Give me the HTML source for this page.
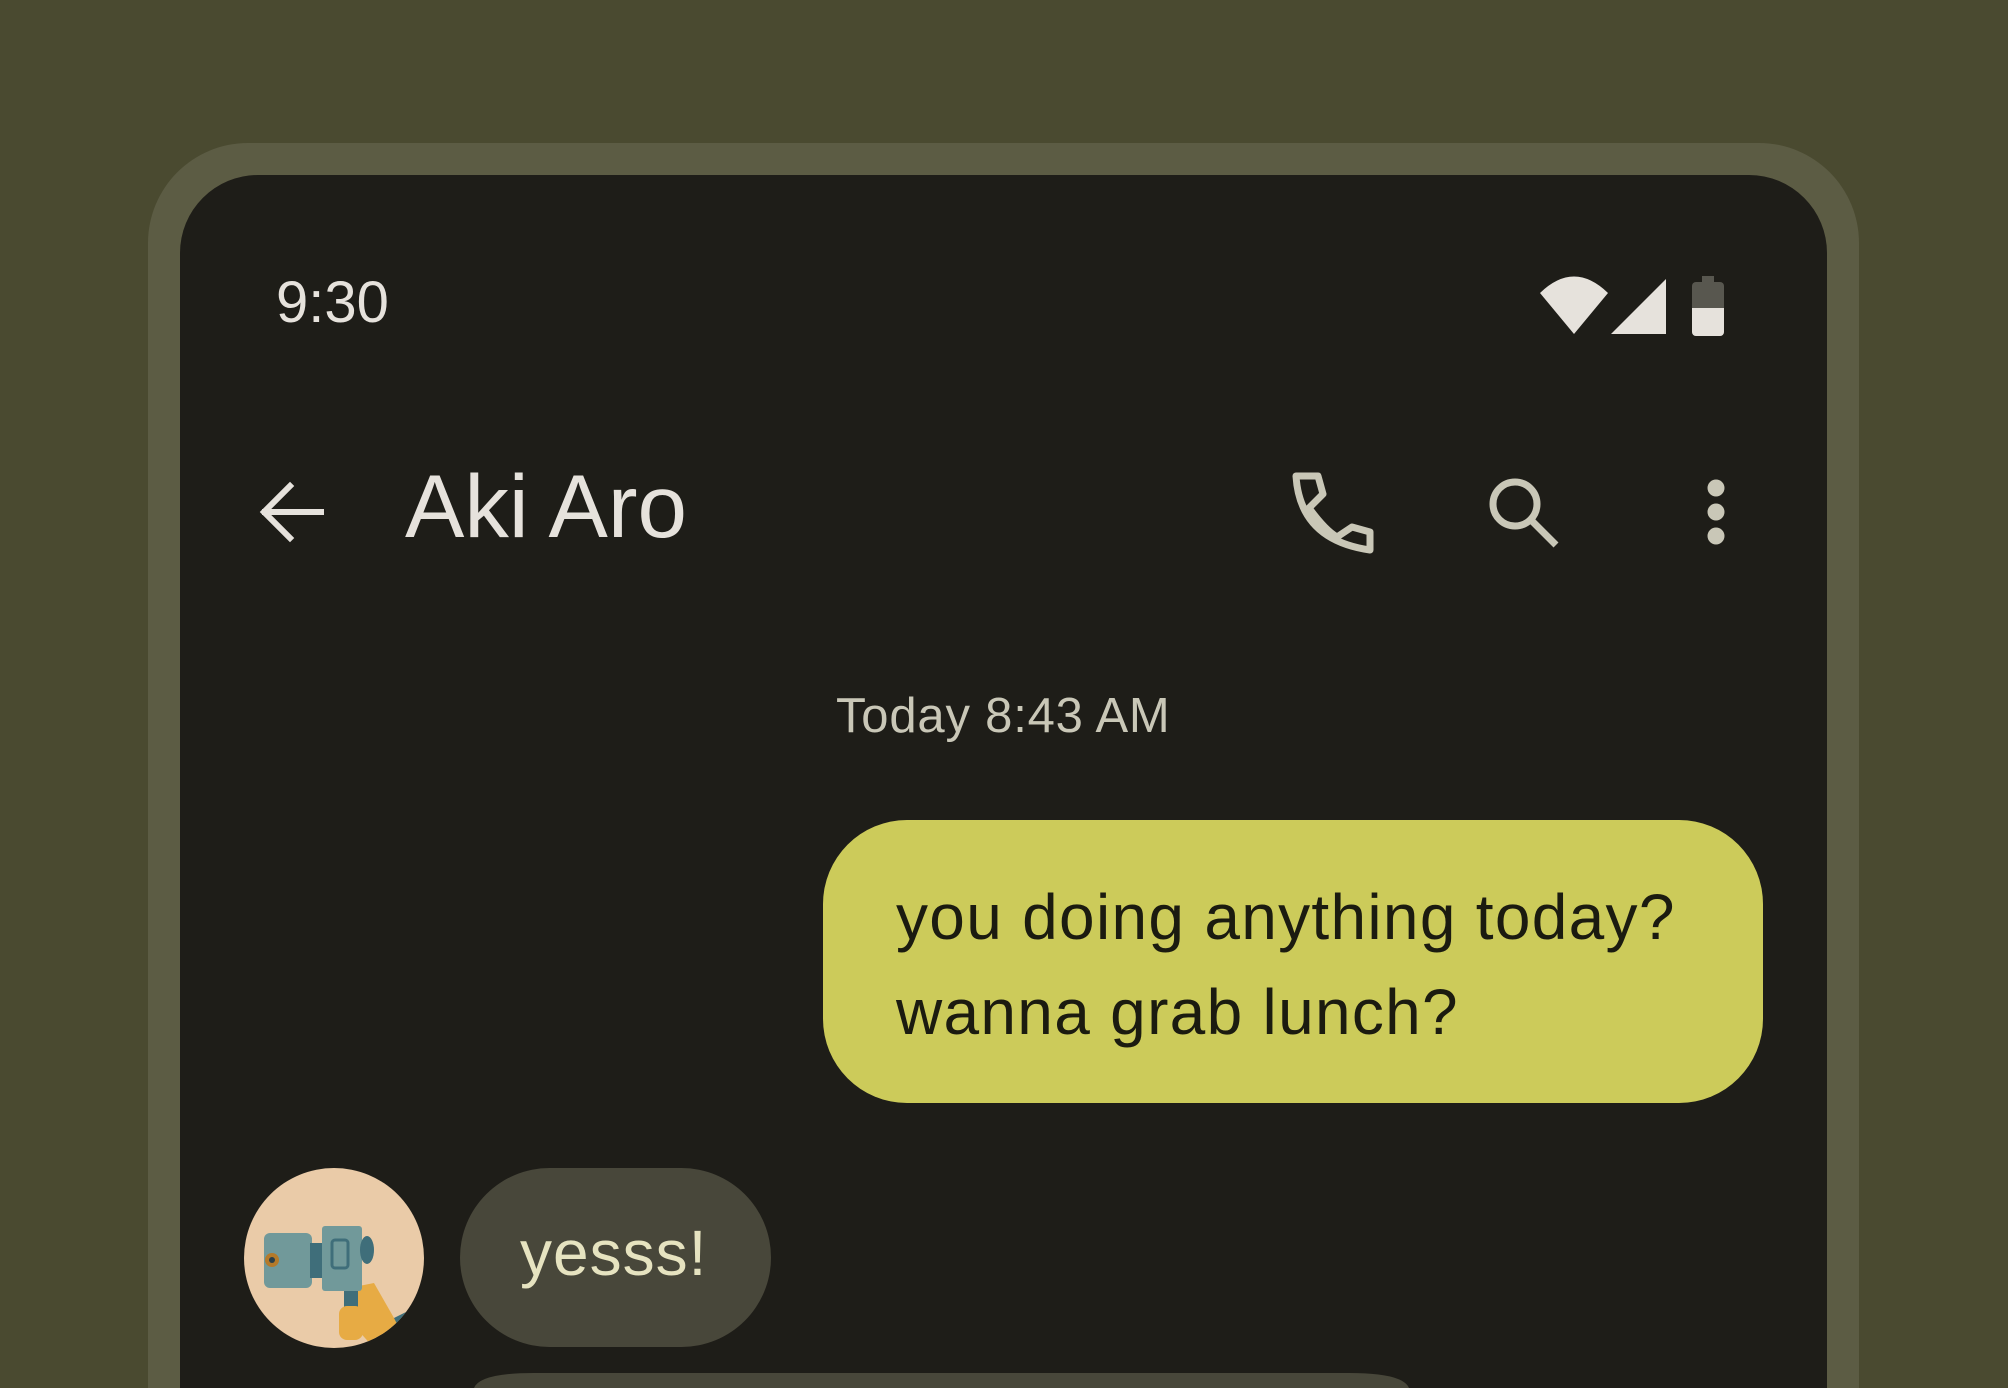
<!DOCTYPE html>
<html><head><meta charset="utf-8"><style>
html,body{margin:0;padding:0;width:2008px;height:1388px;overflow:hidden;background:#4a4a30;font-family:"Liberation Sans",sans-serif}
#wrap{position:relative;width:2008px;height:1388px;overflow:hidden}
.frame{position:absolute;left:148px;top:143px;width:1711px;height:1245px;background:#5c5c44;border-radius:100px 100px 0 0}
.screen{position:absolute;left:180px;top:175px;width:1647px;height:1213px;background:#1e1d18;border-radius:78px 78px 0 0}
.abs{position:absolute;white-space:nowrap}
</style></head><body><div id="wrap">
<div class="frame"></div>
<div class="screen"></div>
<div class="abs" style="left:276px;top:268px;font-size:58px;color:#e6e2dc;line-height:70px">9:30</div>
<svg class="abs" style="left:0;top:0" width="2008" height="1388">
 <path d="M1540 293 Q1574 260 1608 293 L1574 334 Z" fill="#e6e2dc"/>
 <path d="M1611 334 L1666 279 L1666 334 Z" fill="#e6e2dc"/>
 <rect x="1702" y="276" width="12" height="8" fill="#58574f"/>
 <rect x="1692" y="282" width="32" height="54" rx="4" fill="#58574f"/>
 <path d="M1692 308 H1724 V332 a4 4 0 0 1 -4 4 H1696 a4 4 0 0 1 -4 -4Z" fill="#e6e2dc"/>
 <g stroke="#e6e2dc" stroke-width="6" fill="none" stroke-linecap="square">
  <path d="M265 512 H321"/><path d="M290 486 L264 512 L290 538"/>
 </g>
 <g stroke="#c9c7b7" stroke-width="7" fill="none" stroke-linejoin="round">
  <path d="M1296 476 H1318 L1323 494 L1309 508 Q1325 530 1337 537 L1352 527 L1370 532 V550 Q1300 540 1296 476 Z"/>
  <circle cx="1515" cy="504" r="22"/>
  <path d="M1531 520 L1556 545"/>
 </g>
 <g fill="#c9c7b7"><circle cx="1716" cy="488" r="8.5"/><circle cx="1716" cy="512" r="8.5"/><circle cx="1716" cy="536" r="8.5"/></g>
 <path d="M474 1388 Q480 1373 534 1373 H1349 Q1403 1373 1409 1388 Z" fill="#48473a"/>
</svg>
<div class="abs" style="left:405px;top:456px;font-size:89px;color:#e6e2dc;line-height:100px">Aki Aro</div>
<div class="abs" style="left:836px;top:688px;font-size:49px;letter-spacing:0.8px;color:#c9c7b7;line-height:56px">Today 8:43 AM</div>
<div class="abs" style="left:823px;top:820px;width:940px;height:283px;background:#cccb5a;border-radius:84px"></div>
<div class="abs" style="left:896px;top:870px;font-size:64px;letter-spacing:1.3px;color:#1b1b10;line-height:95px">you doing anything today?<br>wanna grab lunch?</div>
<svg class="abs" style="left:244px;top:1168px" width="180" height="180" viewBox="0 0 180 180">
 <defs><clipPath id="c"><circle cx="90" cy="90" r="90"/></clipPath></defs>
 <circle cx="90" cy="90" r="90" fill="#eacba8"/>
 <g clip-path="url(#c)">
  <path d="M150 150 L180 135 L180 180 L140 180Z" fill="#3f6e7a"/>
  <path d="M105 120 L130 115 L150 150 L160 170 L130 180 L112 160Z" fill="#e7ab44"/>
  <rect x="100" y="115" width="14" height="55" rx="4" fill="#3f6e7a"/>
  <rect x="95" y="138" width="24" height="34" rx="8" fill="#e7ab44"/>
  <rect x="20" y="65" width="48" height="55" rx="6" fill="#71999a"/>
  <rect x="66" y="75" width="12" height="35" fill="#3f6e7a"/>
  <rect x="78" y="58" width="40" height="65" rx="3" fill="#71999a"/>
  <rect x="88" y="72" width="16" height="28" rx="3" fill="none" stroke="#3f6e7a" stroke-width="3"/>
  <ellipse cx="123" cy="82" rx="7" ry="14" fill="#3f6e7a"/>
  <circle cx="28" cy="92" r="7" fill="#b47a2a"/><circle cx="28" cy="92" r="3" fill="#2a3f4a"/>
 </g>
</svg>
<div class="abs" style="left:460px;top:1168px;width:311px;height:179px;background:#48473a;border-radius:90px"></div>
<div class="abs" style="left:520px;top:1216px;font-size:64px;letter-spacing:1px;color:#e6e3c0;line-height:74px">yesss!</div>
</div></body></html>
